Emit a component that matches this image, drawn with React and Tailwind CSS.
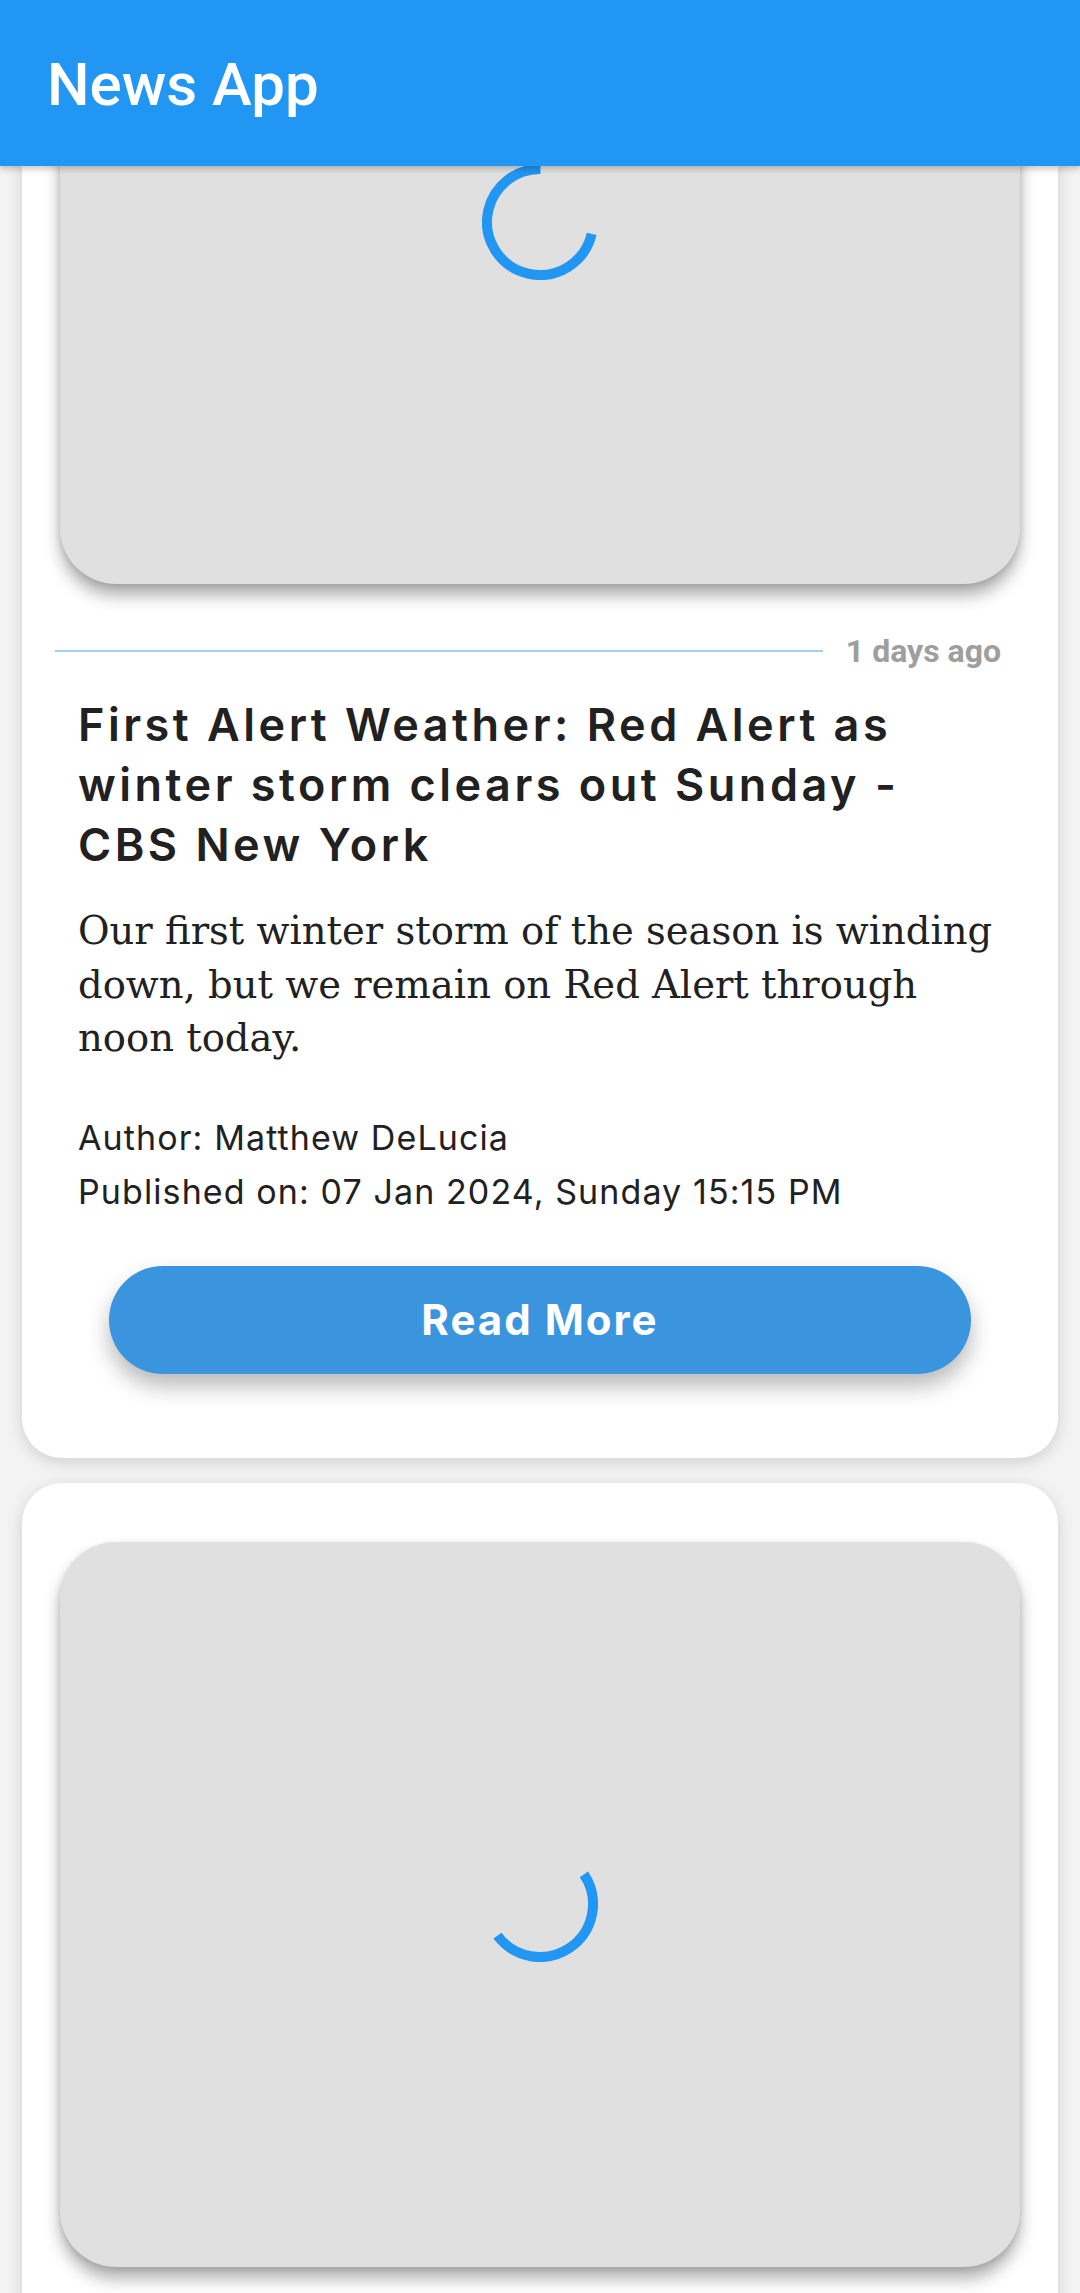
import React from 'react'

function Spinner({ start, sweep }) {
    const c = 2 * Math.PI * 53
    const dash = (sweep / 360) * c
    return (
        <svg width="116" height="116" viewBox="0 0 116 116">
            <circle
                cx="58"
                cy="58"
                r="53"
                fill="none"
                stroke="#2196f3"
                strokeWidth="10"
                strokeDasharray={`${dash} ${c}`}
                transform={`rotate(${start} 58 58)`}
            />
        </svg>
    )
}

function ImageBox({ spinner }) {
    return (
        <div className="h-[725px] mx-[38px] rounded-[56px] bg-[#e0e0e0] shadow-[0_12px_16px_rgba(0,0,0,0.3),0_2px_6px_rgba(0,0,0,0.12)] flex items-center justify-center">
            {spinner}
        </div>
    )
}

function NewsCard({ spinner, children }) {
    return (
        <div className="bg-white rounded-[40px] shadow-[0_4px_16px_rgba(0,0,0,0.15)] pt-[59px] pb-[84px]">
            <ImageBox spinner={spinner} />
            {children}
        </div>
    )
}

export default function App() {
    return (
        <div className="h-[2293px] bg-[#f3f3f3] flex flex-col overflow-hidden">
            <header className="h-[166px] shrink-0 bg-[#2196f3] relative z-10 flex items-center px-[47px] pt-[4px] shadow-[0_3px_6px_rgba(0,0,0,0.22)]">
                <h1 className="text-white text-[60px] font-medium" style={{ fontFamily: 'Roboto, sans-serif' }}>News App</h1>
            </header>
            <main className="flex-1 overflow-hidden">
                <div className="-mt-[366px] px-[22px] flex flex-col gap-[25px]">
                    <NewsCard spinner={<Spinner start={13} sweep={257} />}>
                        <div className="flex items-center mt-[48px] pl-[33px] pr-[57px] gap-[23px]">
                            <div className="flex-1 h-[2px] bg-[#a3cff2]" />
                            <span className="text-[32px] leading-[38px] font-bold text-[#9e9e9e]" style={{ fontFamily: 'Roboto, sans-serif' }}>1 days ago</span>
                        </div>
                        <div className="px-[56px] text-[#212121]">
                            <h2 className="mt-[25px] text-[45px] leading-[60px] font-semibold tracking-[3.5px] whitespace-nowrap" style={{ fontFamily: 'Inter, sans-serif' }}>
                                <span className="block">First Alert Weather: Red Alert as</span>
                                <span className="block">winter storm clears out Sunday -</span>
                                <span className="block">CBS New York</span>
                            </h2>
                            <p className="mt-[29px] text-[38.5px] leading-[53.5px] whitespace-nowrap" style={{ fontFamily: '"DejaVu Serif", serif' }}>
                                <span className="block">Our first winter storm of the season is winding</span>
                                <span className="block">down, but we remain on Red Alert through</span>
                                <span className="block">noon today.</span>
                            </p>
                            <div className="mt-[46px] text-[34px] leading-[54px] tracking-[1.1px]" style={{ fontFamily: 'Inter, sans-serif' }}>
                                <p>Author: Matthew DeLucia</p>
                                <p>Published on: 07 Jan 2024, Sunday 15:15 PM</p>
                            </div>
                        </div>
                        <div className="mt-[47px] px-[87px]">
                            <button className="w-full h-[108px] rounded-full bg-[#3a95de] text-white text-[42px] font-bold tracking-[2px] shadow-[0_12px_22px_rgba(0,0,0,0.28)]" style={{ fontFamily: 'Inter, sans-serif' }}>
                                Read More
                            </button>
                        </div>
                    </NewsCard>
                    <NewsCard spinner={<Spinner start={-34} sweep={177} />} />
                </div>
            </main>
        </div>
    )
}
